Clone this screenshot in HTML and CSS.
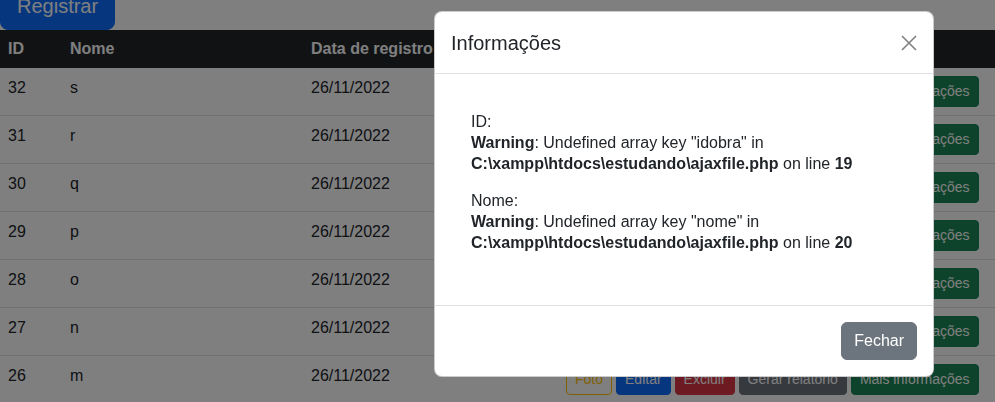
FILE: index.html
```html
<!DOCTYPE html>
<html lang="pt-BR">
<head>
    <meta charset="UTF-8">
    <title>Obras</title>
    <link rel="stylesheet" href="styles.css">
</head>

<body>
    <div class="page">
        <div class="toolbar">
            <button class="btn btn-primary btn-lg">Registrar</button>
        </div>

        <table class="table">
            <thead>
                <tr>
                    <th class="col-id">ID</th>
                    <th class="col-nome">Nome</th>
                    <th class="col-data">Data de registro</th>
                    <th></th>
                </tr>
            </thead>
            <tbody>
                <tr>
                    <td>32</td><td>s</td><td>26/11/2022</td>
                    <td><div class="actions"><button class="btn btn-sm btn-outline-warning">Foto</button><button class="btn btn-sm btn-primary">Editar</button><button class="btn btn-sm btn-danger">Excluir</button><button class="btn btn-sm btn-secondary">Gerar relatorio</button><button class="btn btn-sm btn-success">Mais informações</button></div></td>
                </tr>
                <tr>
                    <td>31</td><td>r</td><td>26/11/2022</td>
                    <td><div class="actions"><button class="btn btn-sm btn-outline-warning">Foto</button><button class="btn btn-sm btn-primary">Editar</button><button class="btn btn-sm btn-danger">Excluir</button><button class="btn btn-sm btn-secondary">Gerar relatorio</button><button class="btn btn-sm btn-success">Mais informações</button></div></td>
                </tr>
                <tr>
                    <td>30</td><td>q</td><td>26/11/2022</td>
                    <td><div class="actions"><button class="btn btn-sm btn-outline-warning">Foto</button><button class="btn btn-sm btn-primary">Editar</button><button class="btn btn-sm btn-danger">Excluir</button><button class="btn btn-sm btn-secondary">Gerar relatorio</button><button class="btn btn-sm btn-success">Mais informações</button></div></td>
                </tr>
                <tr>
                    <td>29</td><td>p</td><td>26/11/2022</td>
                    <td><div class="actions"><button class="btn btn-sm btn-outline-warning">Foto</button><button class="btn btn-sm btn-primary">Editar</button><button class="btn btn-sm btn-danger">Excluir</button><button class="btn btn-sm btn-secondary">Gerar relatorio</button><button class="btn btn-sm btn-success">Mais informações</button></div></td>
                </tr>
                <tr>
                    <td>28</td><td>o</td><td>26/11/2022</td>
                    <td><div class="actions"><button class="btn btn-sm btn-outline-warning">Foto</button><button class="btn btn-sm btn-primary">Editar</button><button class="btn btn-sm btn-danger">Excluir</button><button class="btn btn-sm btn-secondary">Gerar relatorio</button><button class="btn btn-sm btn-success">Mais informações</button></div></td>
                </tr>
                <tr>
                    <td>27</td><td>n</td><td>26/11/2022</td>
                    <td><div class="actions"><button class="btn btn-sm btn-outline-warning">Foto</button><button class="btn btn-sm btn-primary">Editar</button><button class="btn btn-sm btn-danger">Excluir</button><button class="btn btn-sm btn-secondary">Gerar relatorio</button><button class="btn btn-sm btn-success">Mais informações</button></div></td>
                </tr>
                <tr>
                    <td>26</td><td>m</td><td>26/11/2022</td>
                    <td><div class="actions"><button class="btn btn-sm btn-outline-warning">Foto</button><button class="btn btn-sm btn-primary">Editar</button><button class="btn btn-sm btn-danger">Excluir</button><button class="btn btn-sm btn-secondary">Gerar relatorio</button><button class="btn btn-sm btn-success">Mais informações</button></div></td>
                </tr>
            </tbody>
        </table>
    </div>

    <!-- modal de informações -->
    <div class="modal-backdrop"></div>

    <div class="modal">
        <div class="modal-header">
            <h5 class="modal-title">Informações</h5>
            <button class="btn-close" aria-label="Close">
                <svg width="16" height="16" viewBox="0 0 16 16">
                    <path d="M1 1L15 15M15 1L1 15" stroke="#000" stroke-width="1.6" fill="none"/>
                </svg>
            </button>
        </div>
        <div class="modal-body">
            <div class="info">
                <p>ID: <br><b>Warning</b>: Undefined array key "idobra" in <b>C:\xampp\htdocs\estudando\ajaxfile.php</b> on line <b>19</b><br></p>
                <p>Nome: <br><b>Warning</b>: Undefined array key "nome" in <b>C:\xampp\htdocs\estudando\ajaxfile.php</b> on line <b>20</b><br></p>
            </div>
        </div>
        <div class="modal-footer">
            <button class="btn btn-secondary">Fechar</button>
        </div>
    </div>
</body>

</html>
```

FILE: styles.css
```css
body {
    font-family: "Segoe UI", "Liberation Sans", Arial, sans-serif;
    font-size: 16px;
    line-height: 1.5;
    color: #212529;
    background-color: #fff;
    margin: 0;
    padding: 0;
    overflow: hidden;
}

/* a página está rolada um pouco para baixo */
.page {
    margin-top: -18px;
}

.toolbar {
    display: flex;
}

/* botões */

.btn {
    font-family: inherit;
    font-size: 16px;
    line-height: 24px;
    padding: 6px 12px;
    border: 1px solid transparent;
    border-radius: 6px;
    color: #fff;
    white-space: nowrap;
    cursor: pointer;
}

.btn-lg {
    font-size: 20px;
    line-height: 30px;
    padding: 8px 16px;
    border-radius: 8px;
}

.btn-sm {
    font-size: 14px;
    line-height: 21px;
    padding: 4px 8px;
    border-radius: 4px;
}

.btn-primary {
    background-color: #0d6efd;
    border-color: #0d6efd;
}

.btn-secondary {
    background-color: #6c757d;
    border-color: #6c757d;
}

.btn-success {
    background-color: #198754;
    border-color: #198754;
}

.btn-danger {
    background-color: #dc3545;
    border-color: #dc3545;
}

.btn-outline-warning {
    background-color: transparent;
    border-color: #ffc107;
    color: #ffc107;
}

/* tabela */

.table {
    width: 100%;
    border-collapse: collapse;
    table-layout: fixed;
}

.table th {
    background-color: #212529;
    color: #fff;
    font-weight: bold;
    text-align: left;
    padding: 7px 8px;
}

.table td {
    padding: 8px;
    vertical-align: top;
    border-bottom: 1px solid #dee2e6;
}

.col-id {
    width: 46px;
}

.col-nome {
    width: 225px;
}

.col-data {
    width: 239px;
}

.actions {
    display: flex;
    gap: 4px;
}

/* The Modal (background) */

.modal-backdrop {
    position: fixed;
    left: 0;
    top: 0;
    width: 100%;
    height: 100%;
    background-color: rgba(0, 0, 0, 0.5);
}

/* Modal Content */

.modal {
    position: fixed;
    left: 434px;
    top: 11px;
    width: 498px;
    background-color: #fff;
    border: 1px solid rgba(0, 0, 0, 0.2);
    border-radius: 8px;
    display: flex;
    flex-direction: column;
}

.modal-header {
    display: flex;
    align-items: center;
    justify-content: space-between;
    padding: 16px 16px 15px;
    border-bottom: 1px solid #dee2e6;
}

.modal-title {
    margin: 0;
    font-size: 20px;
    font-weight: 500;
    line-height: 30px;
}

.btn-close {
    display: flex;
    padding: 0;
    border: none;
    background: none;
    opacity: 0.5;
    cursor: pointer;
}

.modal-body {
    padding: 17px 16px 16px;
}

.info {
    padding: 20px;
}

.info p {
    margin: 0 0 16px;
    line-height: 21px;
}

.modal-footer {
    display: flex;
    justify-content: flex-end;
    padding: 12px;
    border-top: 1px solid #dee2e6;
}

.modal-footer .btn {
    margin: 4px;
}
```
